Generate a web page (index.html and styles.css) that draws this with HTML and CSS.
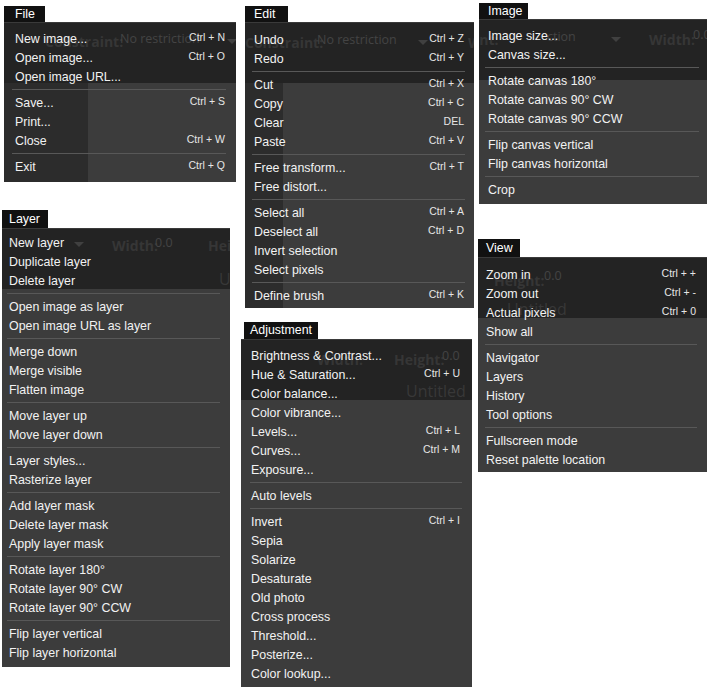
FILE: index.html
```html
<!DOCTYPE html>
<html lang="en">
<head>
<meta charset="utf-8">
<title>Menus</title>
<link rel="stylesheet" href="styles.css">
</head>
<body>
<div class="sheet">
  <div class="col col-1">
    <section class="menu m-file">
      <div class="tab">File</div>
      <ul class="panel">
        <li class="under" aria-hidden="true">
          <span class="ghost g-bold" style="left:41px;top:9px">Constraint:</span>
          <span class="ghost g-light" style="left:116px;top:7px">No restriction</span>
          <span class="ghost g-caret" style="left:223px;top:16px"></span>
        </li>
        <li class="item"><span>New image...</span><kbd>Ctrl + N</kbd></li>
        <li class="item"><span>Open image...</span><kbd>Ctrl + O</kbd></li>
        <li class="item"><span>Open image URL...</span></li>
        <li class="sep"></li>
        <li class="item"><span>Save...</span><kbd>Ctrl + S</kbd></li>
        <li class="item"><span>Print...</span></li>
        <li class="item"><span>Close</span><kbd>Ctrl + W</kbd></li>
        <li class="sep"></li>
        <li class="item"><span>Exit</span><kbd>Ctrl + Q</kbd></li>
      </ul>
    </section>
    <section class="menu m-layer">
      <div class="tab">Layer</div>
      <ul class="panel">
        <li class="under" aria-hidden="true">
          <span class="ghost g-caret" style="left:72px;top:13px"></span>
          <span class="ghost g-bold" style="left:110px;top:7px">Width:</span>
          <span class="ghost g-light" style="left:153px;top:5px">0.0</span>
          <span class="ghost g-bold" style="left:206px;top:7px">Hei</span>
          <span class="ghost g-big" style="left:217px;top:39px">U</span>
        </li>
        <li class="item"><span>New layer</span></li>
        <li class="item"><span>Duplicate layer</span></li>
        <li class="item"><span>Delete layer</span></li>
        <li class="sep"></li>
        <li class="item"><span>Open image as layer</span></li>
        <li class="item"><span>Open image URL as layer</span></li>
        <li class="sep"></li>
        <li class="item"><span>Merge down</span></li>
        <li class="item"><span>Merge visible</span></li>
        <li class="item"><span>Flatten image</span></li>
        <li class="sep"></li>
        <li class="item"><span>Move layer up</span></li>
        <li class="item"><span>Move layer down</span></li>
        <li class="sep"></li>
        <li class="item"><span>Layer styles...</span></li>
        <li class="item"><span>Rasterize layer</span></li>
        <li class="sep"></li>
        <li class="item"><span>Add layer mask</span></li>
        <li class="item"><span>Delete layer mask</span></li>
        <li class="item"><span>Apply layer mask</span></li>
        <li class="sep"></li>
        <li class="item"><span>Rotate layer 180°</span></li>
        <li class="item"><span>Rotate layer 90° CW</span></li>
        <li class="item"><span>Rotate layer 90° CCW</span></li>
        <li class="sep"></li>
        <li class="item"><span>Flip layer vertical</span></li>
        <li class="item"><span>Flip layer horizontal</span></li>
      </ul>
    </section>
  </div>

  <div class="col col-2">
    <section class="menu m-edit">
      <div class="tab">Edit</div>
      <ul class="panel">
        <li class="under" aria-hidden="true">
          <span class="ghost g-bold" style="left:0px;top:10px">Constraint:</span>
          <span class="ghost g-light" style="left:72px;top:8px">No restriction</span>
          <span class="ghost g-caret" style="left:173px;top:17px"></span>
          <span class="ghost g-bold" style="left:223px;top:10px">Wi</span>
        </li>
        <li class="item"><span>Undo</span><kbd>Ctrl + Z</kbd></li>
        <li class="item"><span>Redo</span><kbd>Ctrl + Y</kbd></li>
        <li class="sep"></li>
        <li class="item"><span>Cut</span><kbd>Ctrl + X</kbd></li>
        <li class="item"><span>Copy</span><kbd>Ctrl + C</kbd></li>
        <li class="item"><span>Clear</span><kbd>DEL</kbd></li>
        <li class="item"><span>Paste</span><kbd>Ctrl + V</kbd></li>
        <li class="sep"></li>
        <li class="item"><span>Free transform...</span><kbd>Ctrl + T</kbd></li>
        <li class="item"><span>Free distort...</span></li>
        <li class="sep"></li>
        <li class="item"><span>Select all</span><kbd>Ctrl + A</kbd></li>
        <li class="item"><span>Deselect all</span><kbd>Ctrl + D</kbd></li>
        <li class="item"><span>Invert selection</span></li>
        <li class="item"><span>Select pixels</span></li>
        <li class="sep"></li>
        <li class="item"><span>Define brush</span><kbd>Ctrl + K</kbd></li>
      </ul>
    </section>
    <section class="menu m-adjust">
      <div class="tab">Adjustment</div>
      <ul class="panel">
        <li class="under" aria-hidden="true">
          <span class="ghost g-bold" style="left:76px;top:10px">Width:</span>
          <span class="ghost g-bold" style="left:153px;top:10px">Height:</span>
          <span class="ghost g-light" style="left:201px;top:7px">0.0</span>
          <span class="ghost g-big" style="left:165px;top:40px">Untitled</span>
        </li>
        <li class="item"><span>Brightness &amp; Contrast...</span></li>
        <li class="item"><span>Hue &amp; Saturation...</span><kbd>Ctrl + U</kbd></li>
        <li class="item"><span>Color balance...</span></li>
        <li class="item"><span>Color vibrance...</span></li>
        <li class="item"><span>Levels...</span><kbd>Ctrl + L</kbd></li>
        <li class="item"><span>Curves...</span><kbd>Ctrl + M</kbd></li>
        <li class="item"><span>Exposure...</span></li>
        <li class="sep"></li>
        <li class="item"><span>Auto levels</span></li>
        <li class="sep"></li>
        <li class="item"><span>Invert</span><kbd>Ctrl + I</kbd></li>
        <li class="item"><span>Sepia</span></li>
        <li class="item"><span>Solarize</span></li>
        <li class="item"><span>Desaturate</span></li>
        <li class="item"><span>Old photo</span></li>
        <li class="item"><span>Cross process</span></li>
        <li class="item"><span>Threshold...</span></li>
        <li class="item"><span>Posterize...</span></li>
        <li class="item"><span>Color lookup...</span></li>
      </ul>
    </section>
  </div>

  <div class="col col-3">
    <section class="menu m-image">
      <div class="tab">Image</div>
      <ul class="panel">
        <li class="under" aria-hidden="true">
          <span class="ghost g-bold" style="left:-4px;top:10px">int:</span>
          <span class="ghost g-light" style="left:68px;top:8px">ction</span>
          <span class="ghost g-caret" style="left:132px;top:17px"></span>
          <span class="ghost g-bold" style="left:170px;top:10px">Width:</span>
          <span class="ghost g-light" style="left:214px;top:6px">0.0</span>
        </li>
        <li class="item"><span>Image size...</span></li>
        <li class="item"><span>Canvas size...</span></li>
        <li class="sep"></li>
        <li class="item"><span>Rotate canvas 180°</span></li>
        <li class="item"><span>Rotate canvas 90° CW</span></li>
        <li class="item"><span>Rotate canvas 90° CCW</span></li>
        <li class="sep"></li>
        <li class="item"><span>Flip canvas vertical</span></li>
        <li class="item"><span>Flip canvas horizontal</span></li>
        <li class="sep"></li>
        <li class="item"><span>Crop</span></li>
      </ul>
    </section>
    <section class="menu m-view">
      <div class="tab">View</div>
      <ul class="panel">
        <li class="under" aria-hidden="true">
          <span class="ghost g-bold" style="left:16px;top:13px">Height:</span>
          <span class="ghost g-light" style="left:66px;top:9px">0.0</span>
          <span class="ghost g-big" style="left:29px;top:40px">Untitled</span>
        </li>
        <li class="item"><span>Zoom in</span><kbd>Ctrl + +</kbd></li>
        <li class="item"><span>Zoom out</span><kbd>Ctrl + -</kbd></li>
        <li class="item"><span>Actual pixels</span><kbd>Ctrl + 0</kbd></li>
        <li class="item"><span>Show all</span></li>
        <li class="sep"></li>
        <li class="item"><span>Navigator</span></li>
        <li class="item"><span>Layers</span></li>
        <li class="item"><span>History</span></li>
        <li class="item"><span>Tool options</span></li>
        <li class="sep"></li>
        <li class="item"><span>Fullscreen mode</span></li>
        <li class="item"><span>Reset palette location</span></li>
      </ul>
    </section>
  </div>
</div>
</body>
</html>
```

FILE: styles.css
```css
html, body {
  margin: 0;
  padding: 0;
  background: #ffffff;
}

body {
  font-family: "Liberation Sans", Arial, sans-serif;
  font-size: 12px;
}

.sheet {
  display: flex;
  width: 707px;
  height: 692px;
  overflow: hidden;
}

.col {
  display: flex;
  flex-direction: column;
  align-items: flex-start;
}

.col-1 { width: 240px; }
.col-2 { width: 237px; }
.col-3 { width: 230px; }

.menu {
  --pl: 10px;
  --pr: 10px;
  --sl: 8px;
  --sr: 9px;
  display: flex;
  flex-direction: column;
  align-items: flex-start;
}

.tab {
  box-sizing: border-box;
  background: #111111;
  color: #ffffff;
  font-size: 12.4px;
  height: 16px;
  line-height: 16px;
  padding-left: var(--pl);
  white-space: nowrap;
}

.panel {
  position: relative;
  list-style: none;
  margin: 0;
  box-sizing: border-box;
  align-self: stretch;
  background: linear-gradient(#232323 0 60px, #3c3c3c 60px);
  border-top: 1px solid #3a3a3a;
  overflow: hidden;
}

/* faint application chrome seen through the translucent menus */
.under {
  position: absolute;
  inset: 0;
  pointer-events: none;
}

.ghost {
  position: absolute;
  white-space: nowrap;
  font-family: "Open Sans", "Liberation Sans", sans-serif;
}

.g-bold {
  font-weight: 700;
  font-size: 14px;
  color: #363636;
}

.g-light {
  font-size: 12.5px;
  color: #444444;
}

.g-big {
  font-size: 16px;
  color: #383838;
}

.g-caret {
  width: 0;
  height: 0;
  border-left: 5px solid transparent;
  border-right: 5px solid transparent;
  border-top: 5px solid #404040;
}

.item {
  position: relative;
  display: flex;
  justify-content: space-between;
  align-items: center;
  height: 19px;
  padding: 0 var(--pr) 0 var(--pl);
  color: #f2f2f2;
  font-size: 12.4px;
  white-space: nowrap;
}

.item kbd {
  font-family: "Liberation Sans", Arial, sans-serif;
  font-size: 10.5px;
  color: #e6e6e6;
  margin-bottom: 4px;
}

.sep {
  position: relative;
  height: 1px;
  background: #585858;
  margin: 3px var(--sr) 3px var(--sl);
}

/* File */
.m-file { width: 232px; margin: 6px 0 0 4px; --pl: 11px; --pr: 11px; --sl: 8px; --sr: 10px; }
.m-file .tab { width: 41px; }
.m-file .panel {
  padding: 6px 0 6px;
  background:
    linear-gradient(#232323, #232323) 0 0 / 100% 60px no-repeat,
    linear-gradient(#2c2c2c, #2c2c2c) 0 60px / 84px 100% no-repeat,
    #3c3c3c;
}

/* Layer */
.m-layer { width: 228px; margin: 28px 0 0 2px; --pl: 7px; --pr: 10px; --sl: 5px; --sr: 10px; }
.m-layer .tab { width: 46px; height: 18px; line-height: 18px; }
.m-layer .panel { padding: 4px 0 5px; }

/* Edit */
.m-edit { width: 229px; margin: 6px 0 0 5px; --pl: 9px; --pr: 10px; --sl: 7px; --sr: 9px; }
.m-edit .tab { width: 43px; }
.m-edit .panel {
  padding: 7px 0 3px;
  background:
    linear-gradient(#232323, #232323) 0 0 / 100% 60px no-repeat,
    linear-gradient(#2c2c2c, #2c2c2c) 0 60px / 38px 100% no-repeat,
    #3c3c3c;
}

/* Adjustment */
.m-adjust { width: 231px; margin: 14px 0 0 1px; --pl: 10px; --pr: 12px; --sl: 9px; --sr: 10px; }
.m-adjust .tab { width: 74px; height: 17px; line-height: 17px; margin-left: 3px; padding-left: 6px; }
.m-adjust .panel { padding: 6px 0 4px; }

/* Image */
.m-image { width: 228px; margin: 3px 0 0 2px; --pl: 9px; --pr: 10px; --sl: 6px; --sr: 8px; }
.m-image .tab { width: 49px; }
.m-image .panel { padding: 6px 0 5px; }

/* View */
.m-view { width: 229px; margin: 35px 0 0 1px; --pl: 8px; --pr: 11px; --sl: 7px; --sr: 10px; }
.m-view .tab { width: 42px; height: 18px; line-height: 18px; }
.m-view .panel { padding: 7px 0 3px; }
```
